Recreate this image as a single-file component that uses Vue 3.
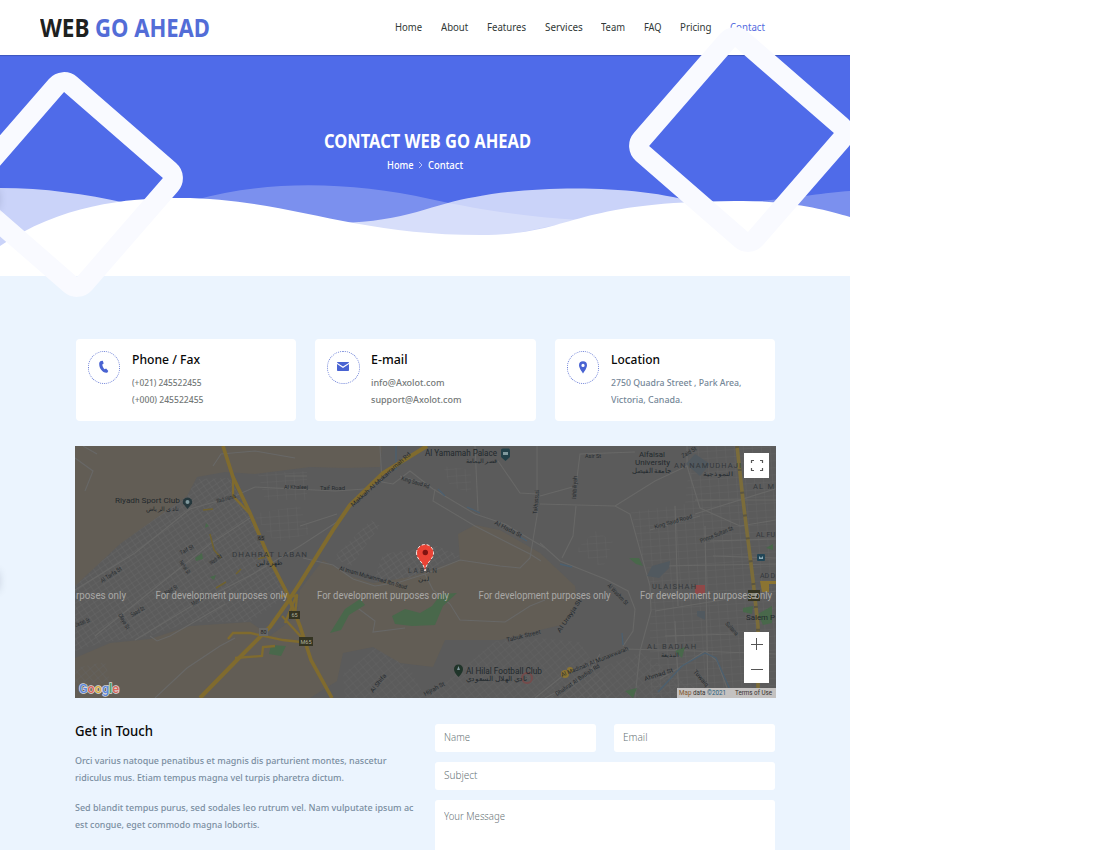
<script setup>
const vFit = {
  mounted(el, binding) {
    const natural = el.getBoundingClientRect().width
    el.style.width = binding.value + 'px'
    el.style.transform = `scaleX(${binding.value / natural})`
  }
}

const nav = [
  ['Home', 27], ['About', 27.3], ['Features', 39], ['Services', 37.7],
  ['Team', 24], ['FAQ', 17.6], ['Pricing', 31.6], ['Contact', 35]
]

const cards = [
  { icon: 'phone', title: ['Phone / Fax', 68], lines: [['(+021) 245522455', 69.5], ['(+000) 245522455', 71.5]] },
  { icon: 'mail', title: ['E-mail', 36.5], lines: [['info@Axolot.com', 73.5], ['support@Axolot.com', 90.5]] },
  { icon: 'pin', title: ['Location', 49], cool: true, lines: [['2750 Quadra Street , Park Area,', 130.5], ['Victoria, Canada.', 71.5]] }
]

const paragraphs = [
  [['Orci varius natoque penatibus et magnis dis parturient montes, nascetur', 311.5], ['ridiculus mus. Etiam tempus magna vel turpis pharetra dictum.', 269]],
  [['Sed blandit tempus purus, sed sodales leo rutrum vel. Nam vulputate ipsum ac', 338.5], ['est congue, eget commodo magna lobortis.', 184.5]]
]

const watermarks = [80.5, 242, 403.5, 565]

const blocks = [
  { fill: 'url(#gridA)', d: 'M0 140L45 98L112 50L122 33L155 32L175 70L198 118L212 150L175 176L115 176L75 190L30 196L0 205Z' },
  { fill: 'url(#gridB)', d: 'M183 27L232 25L232 54L190 54Z M178 68L225 60L235 88L200 96Z' },
  { fill: 'url(#gridA)', d: 'M258 112L296 74L305 80L276 120Z M298 136L308 108L362 100L385 110L335 132Z' },
  { fill: 'url(#gridB)', d: 'M368 20L396 24L396 47L375 40Z M501 104L520 85L538 95L528 122Z' },
  { fill: 'url(#gridC)', d: 'M270 252L268 228L300 202L335 222L350 252Z M350 252L420 195L465 192L505 196L540 252Z' },
  { fill: 'url(#gridB)', d: 'M556 66L610 58L616 0L701 0L701 252L575 252L575 140Z' },
  { fill: 'url(#gridC)', d: 'M475 252L500 232L565 206L610 235L640 252Z M0 222L30 216L35 235L10 242L0 238Z' }
]

const streets = [
  'M0 144L60 107L115 63L160 50L180 41', 'M20 190L85 138L135 98L175 72', 'M60 194L120 158L178 128L225 100L265 74',
  'M0 12L18 25L10 45M8 0L22 8', 'M138 20L146 8L180 5L220 12', 'M180 41L260 45L290 43M210 30L232 30M225 80L262 68',
  'M80 252L112 222L145 200L160 192', 'M75 190L82 195L95 190L150 158', 'M228 112L258 119L278 133L300 140L325 136L350 128L385 114L425 120L445 122L455 112L462 70L462 0',
  'M305 0L307 36L318 38L335 25L358 43L400 68L430 78L470 102', 'M360 43L358 55L400 80L455 108L466 115', 'M400 0L403 65M423 15L445 47L462 48M325 30L345 36',
  'M350 128L358 144L375 158L385 174L430 176L455 160L470 154', 'M280 160L300 175L298 186L330 182', 'M465 58L540 60L555 68L575 140L576 165L565 205L560 252',
  'M465 97L485 115L530 133L553 145L560 163L558 185L548 200', 'M540 60L580 35L612 20L612 0M612 20L625 62L665 80L701 74M620 54L701 54',
  'M575 84L625 70M620 68L700 43M630 80L633 252M600 60L603 160M580 165L701 145', 'M460 252L490 228L550 203L620 205L701 208M470 252L512 230L525 208',
  'M585 233L607 220L630 205L642 215L655 250', 'M465 50L501 40L505 8L560 6M501 60L498 90L487 112', 'M635 95L701 93M638 110L701 112M585 120L701 118M590 190L660 188M600 175L604 252'
]

const labels = [
  { t: 'Riyadh Sport Club', x: 40, y: 57, w: 65, s: 8 }, { t: 'نادي الرياض', x: 71, y: 65, w: 33, s: 6 },
  { t: 'DHAHRAT LABAN', x: 157, y: 111, w: 75, s: 8, m: 1 }, { t: 'ظهرة لبن', x: 181, y: 119, w: 27, s: 6.5 },
  { t: 'Al Yamamah Palace', x: 350, y: 10, w: 72, s: 8.5 }, { t: 'قصر اليمامة', x: 391, y: 17, w: 31, s: 6 },
  { t: 'Alfaisal', x: 564, y: 11, w: 26, s: 7.5 }, { t: 'University', x: 560, y: 19, w: 35, s: 7.5 }, { t: 'جامعة الفيصل', x: 557, y: 27, w: 39, s: 6.5 },
  { t: 'AN NAMUDHAJI', x: 599, y: 22, w: 67, s: 7.5, m: 1 }, { t: 'النموذجية', x: 628, y: 30, w: 30, s: 6 },
  { t: 'AL M', x: 678, y: 43, w: 21, s: 7.5, m: 1 }, { t: 'AL FU', x: 681, y: 91, w: 19, s: 7, m: 1 }, { t: 'AD D', x: 685, y: 132, w: 15, s: 7, m: 1 },
  { t: 'ULAISHAH', x: 577, y: 143, w: 44, s: 7.5, m: 1 }, { t: 'AL BADIAH', x: 572, y: 203, w: 49, s: 7.5, m: 1 }, { t: 'البديعة', x: 586, y: 211, w: 18, s: 6 },
  { t: 'Al Hilal Football Club', x: 391, y: 228, w: 76, s: 8.5 }, { t: 'نادي الهلال السعودي', x: 391, y: 235, w: 61, s: 6.5 },
  { t: 'Salem P', x: 671, y: 174, w: 29, s: 8 }, { t: 'LABAN', x: 333, y: 127, w: 29, s: 6.5, m: 1 }, { t: 'لبن', x: 343, y: 135, w: 11, s: 6 }
]

const roadNames = [
  { t: 'Al Tarfa St', x: 27, y: 137, w: 24, r: -33 }, { t: 'Taif St', x: 106, y: 109, w: 15, r: -28 }, { t: 'Nehal St', x: 104, y: 116, w: 15, r: 56 },
  { t: 'Wadi Rd', x: 136, y: 119, w: 14, r: -34 }, { t: 'Najd St', x: 91, y: 149, w: 14, r: -30 }, { t: 'Mather St', x: 118, y: 160, w: 18, r: -32 },
  { t: 'Olaya St', x: 43, y: 169, w: 17, r: 60 }, { t: 'Saad St', x: 57, y: 171, w: 15, r: -30 }, { t: 'Jadah St', x: 1, y: 181, w: 15, r: -20 },
  { t: 'Wadi Hanifa', x: 142, y: 57, w: 20, r: -15 }, { t: 'Makkah Al Mukarramah Rd', x: 278, y: 61, w: 78, r: -42 },
  { t: 'King Saud Rd', x: 326, y: 34, w: 29, r: 17 }, { t: 'Al Hada St', x: 419, y: 78, w: 30, r: 27 }, { t: 'Al Imam Muhammad Ibn Saud', x: 264, y: 124, w: 70, r: 16 },
  { t: 'King Saud Road', x: 580, y: 83, w: 39, r: -16 }, { t: 'Prince Sultan St', x: 626, y: 97, w: 35, r: -22 }, { t: 'Al Washm St', x: 532, y: 140, w: 27, r: 46 },
  { t: 'Al Urayja St', x: 485, y: 187, w: 39, r: -56 }, { t: 'Al Madinah Al Munawwarah', x: 487, y: 231, w: 72, r: -22 }, { t: 'Dhahrat Al Badiah Rd', x: 482, y: 250, w: 52, r: -34 },
  { t: 'Ahmad St', x: 570, y: 235, w: 30, r: -18 }, { t: 'Tuwaiq', x: 618, y: 226, w: 20, r: 49 }, { t: 'Sultana', x: 650, y: 178, w: 16, r: 48 },
  { t: 'Al Shifa', x: 298, y: 247, w: 22, r: -52 }, { t: 'Hijrah St', x: 350, y: 250, w: 23, r: -28 }, { t: 'Tabuk Street', x: 432, y: 196, w: 35, r: -14 },
  { t: 'Takhassusi', x: 462, y: 68, w: 24, r: -85 }, { t: 'Ishbiliyah', x: 501, y: 53, w: 23, r: -87 }, { t: 'Asir St', x: 510, y: 12, w: 16, r: 0 }, { t: 'Zaid St', x: 608, y: 12, w: 16, r: -30 },
  { t: 'Taif Road', x: 245, y: 44, w: 25, r: 0 }, { t: 'Al Khaleej', x: 209, y: 43, w: 24, r: 0 }
]
</script>

<template>
  <div class="page">
    <header class="header">
      <div class="logo"><span v-fit="49.5">WEB</span><b><span v-fit="115">GO AHEAD</span></b></div>
      <nav class="nav">
        <a v-for="(n, i) in nav" :key="n[0]" v-fit="n[1]" :class="{ active: i === nav.length - 1 }">{{ n[0] }}</a>
      </nav>
    </header>

    <section class="hero">
      <svg class="waves" viewBox="0 0 850 221" width="850" height="221">
        <g fill="#fff">
          <path opacity=".7" d="M0 133C45 133 85 139 126 148L60 180L0 195ZM340 168C405 167 435 148 475 142C535 130 640 129 700 149L640 190L460 190Z" />
          <path opacity=".25" d="M195 145C265 125 350 126 430 144C485 156 530 162 580 165L460 190L340 175ZM740 148C790 144 820 138 850 136V165L780 160Z" />
          <path d="M0 191C60 150 125 143 180 143C285 143 350 180 480 180C575 180 565 147 735 146C785 145 825 154 850 162V221H0Z" />
        </g>
      </svg>
      <div class="hero-copy">
        <h1><span v-fit="207">CONTACT WEB GO AHEAD</span></h1>
        <div class="crumbs">
          <span v-fit="26.5" class="home">Home</span>
          <svg width="5" height="8" viewBox="0 0 5 8"><path d="M1 1L4 4L1 7" fill="none" stroke="#c6cffa" stroke-width=".9" /></svg>
          <span v-fit="35">Contact</span>
        </div>
      </div>
    </section>

    <i class="diamond left"></i>
    <i class="diamond right"></i>
    <i class="edge upper"></i>
    <i class="edge lower"></i>

    <main class="content">
      <div class="cards">
        <article v-for="c in cards" :key="c.icon" class="card">
          <div class="ring">
            <svg v-if="c.icon === 'phone'" width="12" height="14" viewBox="0 0 12 14"><path fill="#4963d2" d="M2.8 .9L4.8 .7L5.7 3.5L4.3 4.6C4.4 6.5 5.2 8.1 6.6 9.2L8.1 8.6L10.3 11L9.2 12.8C4.8 13.5 1 8.5 1.2 3.6C1.3 2.3 1.8 1.3 2.8 .9Z" /></svg>
            <svg v-else-if="c.icon === 'mail'" width="12" height="10" viewBox="0 0 12 10"><path fill="#4963d2" d="M.7 0H11.3Q12 0 12 .8L6 4.6L0 .8Q0 0 .7 0ZM0 2.1L6 5.9L12 2.1V8.2Q12 9 11.2 9H.8Q0 9 0 8.2Z" /></svg>
            <svg v-else width="10" height="13" viewBox="0 0 10 13"><path fill="#4963d2" fill-rule="evenodd" d="M5 .3A4 4 0 0 0 1 4.3C1 7.3 5 12.4 5 12.4S9 7.3 9 4.3A4 4 0 0 0 5 .3ZM5 2.8A1.6 1.6 0 1 1 5 6A1.6 1.6 0 0 1 5 2.8Z" /></svg>
          </div>
          <div class="card-copy" :class="{ cool: c.cool }">
            <h3><span v-fit="c.title[1]">{{ c.title[0] }}</span></h3>
            <p v-for="l in c.lines" :key="l[0]"><span v-fit="l[1]">{{ l[0] }}</span></p>
          </div>
        </article>
      </div>

      <svg class="map" width="701" height="252" viewBox="0 0 701 252">
        <defs>
          <pattern id="gridA" width="6" height="5" patternUnits="userSpaceOnUse" patternTransform="rotate(-34)"><path d="M0 0H6M0 0V5" stroke="#696969" stroke-width=".8" /></pattern>
          <pattern id="gridB" width="9" height="7" patternUnits="userSpaceOnUse" patternTransform="rotate(-4)"><path d="M0 0H9M0 0V7" stroke="#636363" stroke-width=".9" /></pattern>
          <pattern id="gridC" width="6" height="6" patternUnits="userSpaceOnUse" patternTransform="rotate(-40)"><path d="M0 0H6M0 0V6" stroke="#656565" stroke-width=".8" /></pattern>
        </defs>
        <rect width="701" height="252" fill="#5b5b5b" />
        <g fill="#625d55">
          <path d="M0 0H307L305 21L270 22L235 21L180 28L150 26L122 31L112 50L45 98L0 140Z" />
          <path d="M0 212L35 197L75 193L115 180L175 176L195 190L222 170L225 144L248 114L275 130L298 137L335 131L385 114L383 88L400 79L425 84L465 107L500 140L502 154L490 178L465 184L425 194L370 194L358 221L325 217L298 201L268 207L262 235L235 252H0Z" />
        </g>
        <path v-for="b in blocks" :key="b.d" :d="b.d" :fill="b.fill" />
        <g fill="none" stroke="#686867" stroke-width="1.1"><path v-for="s in streets" :key="s" :d="s" /></g>
        <g fill="#51595f">
          <path d="M572 130L577 120L595 115L594 122L584 132ZM622 165H630V174L622 170ZM611 18L620 8L635 18L625 30Z" />
        </g>
        <path d="M321 0V24M363 43L370 50M392 61L405 67M445 91L452 95M485 118L497 121M547 187L548 199M583 246L607 220L630 207L641 212L657 248" fill="none" stroke="#4c6070" stroke-width="1.3" />
        <g fill="#49684b">
          <path d="M255 187L270 163L285 153L290 159L274 169L266 184ZM317 170L330 163L345 167L357 160L366 148L382 147L368 160L360 179L337 180L320 178Z" />
          <path d="M196 199L211 200L206 210L194 208ZM120 112L127 107L128 113L121 115ZM135 131L141 129L139 134ZM554 112L564 112L568 120L561 118ZM668 162L678 160L677 168L668 166ZM683 168L697 160V177L688 179ZM600 205L610 201L607 212ZM550 245L562 242L558 252ZM131 77L134 80L130 82ZM691 102L698 98V104Z" />
        </g>
        <g fill="none" stroke="#70622f" stroke-width="1.5">
          <path d="M128 64L138 63M135 88L139 104L146 112M161 128L166 123M183 113L190 111M141 142L151 136" />
        </g>
        <g fill="none" stroke="#806b2e" stroke-width="3.6">
          <path d="M148 0L158 31L175 67L195 114L212 147L225 180L236 214L257 252" />
          <path d="M125 252L162 214L195 181L212 157L225 137L258 84L275 59L308 27L352 0" stroke-width="4" />
          <path d="M153 193L158 187L175 187L208 194L235 197M160 212L187 210L188 201L200 200M158 31L158 50L176 69M205 150L222 150L220 170M222 148L210 177M207 170L229 194" stroke-width="2.3" />
          <path d="M662 0L668 54L678 134L683 180L683 252" stroke="#7b6c3a" />
        </g>
        <path d="M662 0L668 54L678 134L683 180V252" fill="none" stroke="#5c5640" stroke-width="4" stroke-dasharray="2 21" />
        <g fill="#8b7432"><circle cx="490" cy="228" r="4" /><circle cx="495" cy="224" r="3" /><path d="M685 135H701V138H694V146H687Z" /></g>
        <path d="M620 139H630V148H620Z" fill="#8f4848" />
        <circle cx="452" cy="232" r="5" fill="none" stroke="#754b4b" stroke-width="2" />

        <g fill="#262b2f" font-family="Roboto, sans-serif">
          <text v-for="l in labels" :key="l.t + l.x" :x="l.x" :y="l.y" :font-size="l.s" :textLength="l.w" :fill="l.m ? '#34383b' : '#22292d'" :lengthAdjust="l.m ? 'spacing' : 'spacingAndGlyphs'">{{ l.t }}</text>
          <text v-for="n in roadNames" :key="n.t" font-size="6" :textLength="n.w" :transform="`translate(${n.x} ${n.y}) rotate(${n.r})`" lengthAdjust="spacingAndGlyphs">{{ n.t }}</text>
        </g>
        <g fill="#26383d">
          <path d="M108 57.5A4.7 4.7 0 1 1 117 57.5L112.500 63Z" /><path d="M426 4Q426 2.500 428 2.500H434Q435 3 435 5V11L430.500 15L426 11Z" fill="#224049" />
          <path d="M379 223A4.500 4.500 0 1 1 388 223C388 227 383.500 231 383.500 231S379 227 379 223Z" fill="#20352a" />
          <rect x="682" y="108" width="8" height="7" rx="1" fill="#224657" />
        </g>
        <g fill="#80999e"><circle cx="112.500" cy="56" r="2" /><path d="M428 6H433V9H428Z" /><path d="M383.500 220L385 224H382Z" /></g>
        <path d="M684 110L686 112L688 110V113H684Z" fill="#8facb8" />
        <g font-family="Roboto, sans-serif" font-size="5.5" text-anchor="middle">
          <g fill="#343422"><rect x="214" y="165" width="11" height="8" /><rect x="224" y="191" width="14" height="9" /><rect x="673" y="144" width="12" height="11" /></g>
          <rect x="184" y="182" width="9" height="8" fill="#686866" /><rect x="182" y="89" width="8" height="6" fill="#565653" />
          <path d="M676 147H682V150H676ZM677 151H681V153H677Z" fill="#8d8d7c" />
          <g fill="#b0b09c"><text x="219.500" y="171">65</text><text x="231" y="198">M65</text></g>
          <g fill="#222"><text x="188.500" y="188">80</text><text x="186" y="94">65</text></g>
        </g>

        <g fill="#a9a8a6" font-family="Roboto, sans-serif" font-size="10">
          <text x="1" y="153" textLength="50" lengthAdjust="spacingAndGlyphs">rposes only</text>
          <text v-for="x in watermarks" :key="x" :x="x" y="153" textLength="132" lengthAdjust="spacingAndGlyphs">For development purposes only</text>
        </g>
        <path d="M341.500 107A8.500 8.500 0 1 1 358.500 107C358.500 114 351.500 115 350 125C348.500 115 341.500 114 341.500 107Z" fill="#ea4335" stroke="#f6e4df" stroke-width="1" stroke-dasharray="3 2" />
        <circle cx="350.300" cy="106.500" r="2.700" fill="#811411" />
        <g font-family="Roboto, sans-serif" font-size="13.500" font-weight="500" stroke="#d8d8d8" stroke-width="1.500" paint-order="stroke">
          <text x="4" y="247" textLength="40" lengthAdjust="spacingAndGlyphs"><tspan fill="#5c88dc">G</tspan><tspan fill="#d96559">o</tspan><tspan fill="#d8ad43">o</tspan><tspan fill="#5c88dc">g</tspan><tspan fill="#4c9b61">l</tspan><tspan fill="#d96559">e</tspan></text>
        </g>
        <rect x="602" y="242" width="99" height="10" fill="#c4c2c1" />
        <g fill="#34302e" font-family="Roboto, sans-serif" font-size="6.500">
          <text x="604" y="249.300" textLength="47" lengthAdjust="spacingAndGlyphs"><tspan fill="#80552c">Map</tspan> data <tspan fill="#275b78">©2021</tspan></text><text x="660" y="249.300" textLength="37" lengthAdjust="spacingAndGlyphs">Terms of Use</text>
        </g>
        <rect x="669" y="7" width="25" height="25" fill="#fff" />
        <path d="M676.500 17V14.500H679M685 14.500H687.500V17M687.500 22V24.500H685M679 24.500H676.500V22" fill="none" stroke="#555" stroke-width="1.200" />
        <rect x="669" y="186" width="25" height="51" fill="#fff" />
        <path d="M676 198.500H688M681.500 192V204M676 223.500H688" stroke="#555" stroke-width="1" />
      </svg>

      <div class="bottom">
        <section class="touch">
          <h2><span v-fit="78">Get in Touch</span></h2>
          <p v-for="(p, i) in paragraphs" :key="i">
            <span v-for="l in p" :key="l[0]" class="line"><span v-fit="l[1]">{{ l[0] }}</span></span>
          </p>
        </section>
        <form class="form">
          <div class="field"><span v-fit="26">Name</span></div>
          <div class="field"><span v-fit="24.5">Email</span></div>
          <div class="field wide"><span v-fit="33.5">Subject</span></div>
          <div class="field wide message"><span v-fit="61">Your Message</span></div>
        </form>
      </div>
    </main>
  </div>
</template>

<style>
body { margin: 0; background: #fff; overflow: hidden; }
</style>

<style scoped>
.page { position: relative; width: 850px; height: 850px; overflow: hidden; background: #ebf4fe; font-family: "Noto Sans", "Open Sans", sans-serif; }
.page span, .nav a { display: inline-block; white-space: nowrap; transform-origin: 0 50%; }
h1, h2, h3, p { margin: 0; }
.header { height: 55px; background: #fff; display: flex; box-sizing: border-box; padding: 0 84.7px 0 39.5px; justify-content: space-between; }
.logo { display: flex; gap: 6px; font-size: 25.500px; line-height: 55px; font-weight: 700; color: #1e211f; }
.logo b { font-weight: 700; color: #536dd7; }
.nav { display: flex; gap: 18.700px; font-size: 10.800px; line-height: 54px; color: #303836; }
.nav .active { color: #536be0; }
.hero { height: 221px; background: #4f6be9; box-shadow: inset 0 2px 1px -1px #3c57bd; display: grid; }
.waves, .hero-copy { grid-area: 1 / 1; }
.waves { display: block; }
.hero-copy { color: #fff; display: flex; flex-direction: column; align-items: center; padding-top: 72px; padding-left: 4px; }
h1 { font-size: 19px; line-height: 28px; font-weight: 700; }
.crumbs { display: flex; align-items: center; font-size: 10.500px; line-height: 20px; font-weight: 500; margin-right: 4px; }
.crumbs svg { margin: 0 5px; }
.diamond { position: absolute; box-sizing: border-box; width: 171px; height: 171px; border: 20px solid #f9faff; border-radius: 20px; transform: rotate(41deg); }
.left { left: -15px; top: 99px; }
.right { left: 656px; top: 54px; }
.edge { position: absolute; left: -12px; width: 10px; box-shadow: 0 0 8px rgba(40, 50, 80, .25); }
.upper { top: 190px; height: 18px; }
.lower { top: 572px; height: 18px; }
.content { padding: 63px 75px 0; }
.cards { display: grid; grid-template-columns: repeat(3, 220.500px); gap: 19px; height: 82px; padding-left: .5px; }
.card { background: #fff; border-radius: 4px; display: flex; padding: 12px 0 0 12px; box-sizing: border-box; }
.ring { width: 32.500px; height: 32.500px; border: 1.500px dotted #6f82d8; border-radius: 50%; box-sizing: border-box; display: flex; align-items: center; justify-content: center; margin-right: 11.500px; }
.card-copy { font-size: 9.500px; font-weight: 500; color: #747978; }
.card-copy.cool { color: #758798; }
.card h3 { font-size: 12.800px; line-height: 17px; height: 23px; font-weight: 500; color: #080808; }
.card p { line-height: 17px; height: 17px; }
.map { display: block; margin-top: 25px; }
.bottom { display: flex; margin-top: 26px; }
.touch { width: 360px; font-size: 9.500px; font-weight: 500; color: #7a8ea1; }
h2 { font-size: 14px; line-height: 14px; height: 28px; font-weight: 500; color: #080808; }
.touch p { margin-bottom: 12.500px; }
.line { height: 17px; line-height: 17px; }
.touch p > .line { display: block; }
.form { display: grid; grid-template-columns: 161px 161px; grid-template-rows: 28px 28px 80px; gap: 10px 18px; }
.field { background: #fff; border-radius: 3px; padding-left: 9px; line-height: 27px; font-size: 10.400px; font-weight: 300; color: #687477; }
.wide { grid-column: 1 / 3; }
.message { line-height: 33px; }
</style>
